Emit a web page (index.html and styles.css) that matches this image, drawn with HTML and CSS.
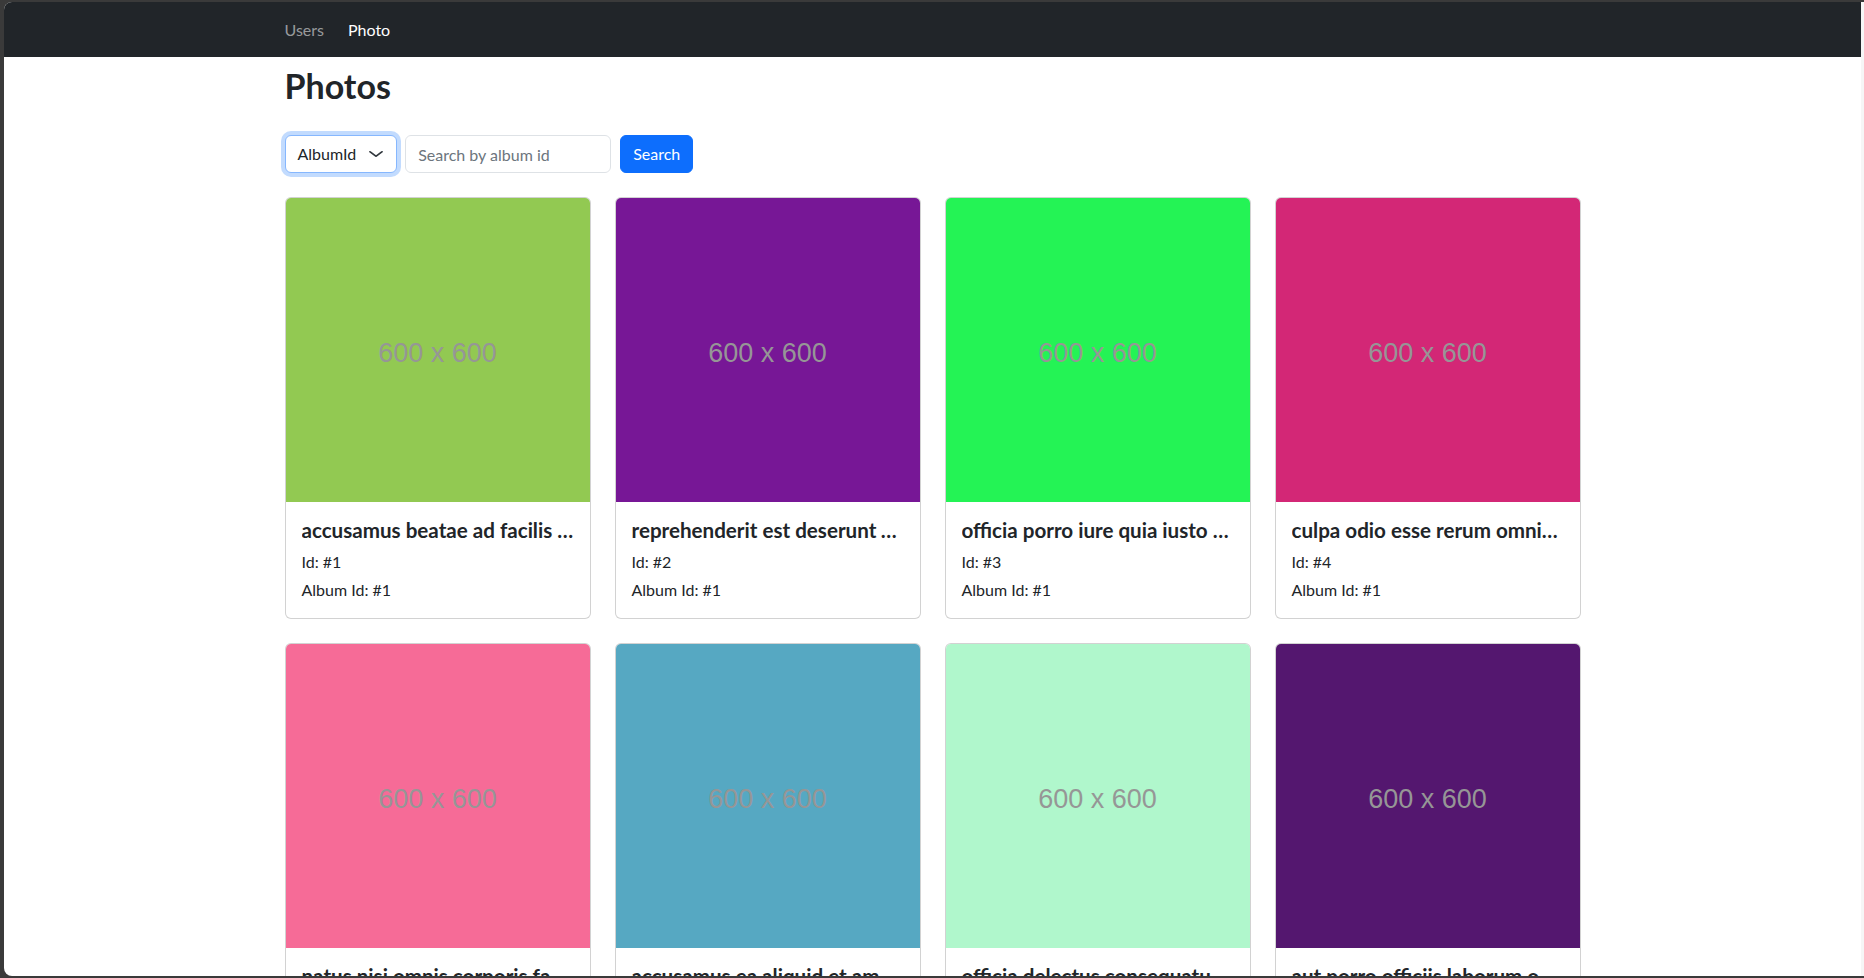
FILE: index.html
```html
<!DOCTYPE html>
<html lang="en">
<head>
<meta charset="utf-8">
<title>Photos</title>
<link rel="stylesheet" href="styles.css">
</head>
<body>
<div class="window">
  <nav class="navbar">
    <div class="container nav-inner">
      <a class="nav-link" href="#">Users</a>
      <a class="nav-link active" href="#">Photo</a>
    </div>
  </nav>
  <main class="container">
    <h2 class="page-title">Photos</h2>
    <form class="search-form">
      <div class="select">
        <span>AlbumId</span>
        <svg class="chevron" viewBox="0 0 16 16" width="16" height="12" preserveAspectRatio="none"><path d="m2 5 6 6 6-6" fill="none" stroke="#343a40" stroke-width="2" stroke-linecap="round" stroke-linejoin="round"/></svg>
      </div>
      <input class="input" type="text" placeholder="Search by album id">
      <button class="btn" type="button">Search</button>
    </form>
    <div class="grid">
      <div class="card"><div class="thumb" style="background:#92c952">600 x 600</div><div class="card-body"><h5 class="card-title">accusamus beatae ad facilis cum similique qui sunt</h5><p class="card-text">Id: #1</p><p class="card-text">Album Id: #1</p></div></div>
      <div class="card"><div class="thumb" style="background:#771796">600 x 600</div><div class="card-body"><h5 class="card-title">reprehenderit est deserunt velit ipsam</h5><p class="card-text">Id: #2</p><p class="card-text">Album Id: #1</p></div></div>
      <div class="card"><div class="thumb" style="background:#24f355">600 x 600</div><div class="card-body"><h5 class="card-title">officia porro iure quia iusto qui ipsa ut modi</h5><p class="card-text">Id: #3</p><p class="card-text">Album Id: #1</p></div></div>
      <div class="card"><div class="thumb" style="background:#d32776">600 x 600</div><div class="card-body"><h5 class="card-title">culpa odio esse rerum omnis laboriosam voluptate repudiandae</h5><p class="card-text">Id: #4</p><p class="card-text">Album Id: #1</p></div></div>
      <div class="card"><div class="thumb" style="background:#f66b97">600 x 600</div><div class="card-body"><h5 class="card-title">natus nisi omnis corporis facere molestiae rerum in</h5><p class="card-text">Id: #5</p><p class="card-text">Album Id: #1</p></div></div>
      <div class="card"><div class="thumb" style="background:#56a8c2">600 x 600</div><div class="card-body"><h5 class="card-title">accusamus ea aliquid et amet sequi nemo</h5><p class="card-text">Id: #6</p><p class="card-text">Album Id: #1</p></div></div>
      <div class="card"><div class="thumb" style="background:#b0f7cc">600 x 600</div><div class="card-body"><h5 class="card-title">officia delectus consequatur vero aut veniam explicabo molestias</h5><p class="card-text">Id: #7</p><p class="card-text">Album Id: #1</p></div></div>
      <div class="card"><div class="thumb" style="background:#54176f">600 x 600</div><div class="card-body"><h5 class="card-title">aut porro officiis laborum odit ea laudantium corporis</h5><p class="card-text">Id: #8</p><p class="card-text">Album Id: #1</p></div></div>
    </div>
  </main>
</div>
</body>
</html>
```
FILE: styles.css
```css
* { box-sizing: border-box; }

html, body {
  margin: 0;
  height: 978px;
  overflow: hidden;
  background: #3a3a3a;
}

body {
  font-family: "Segoe UI", Lato, "Noto Sans", sans-serif;
  font-size: 16px;
  line-height: 1.5;
  color: #212529;
}

.window {
  margin: 2px 0 2px 4px;
  height: 974px;
  background: #fff;
  border-right: 3px solid #f6f6f6;
  border-radius: 8px 0 0 8px;
  overflow: hidden;
}

.container {
  max-width: 1320px;
  margin: 0 auto;
  padding: 0 12px;
}

.navbar {
  background: #212529;
  height: 55px;
  display: flex;
  align-items: center;
}

.nav-inner {
  width: 100%;
  display: flex;
  gap: 24px;
}

.nav-link {
  color: rgba(255, 255, 255, 0.55);
  text-decoration: none;
  font-size: 16px;
  line-height: 24px;
}

.nav-link.active {
  color: #fff;
}

.page-title {
  margin: 9px 0 0;
  font-size: 34px;
  line-height: 40px;
  font-weight: 700;
}

.search-form {
  display: flex;
  align-items: center;
  margin: 29px 0 0;
}

.select {
  display: flex;
  align-items: center;
  height: 38px;
  padding: 0 12px;
  border: 1px solid #86b7fe;
  border-radius: 6px;
  box-shadow: 0 0 0 4px rgba(13, 110, 253, 0.25);
  background: #fff;
  gap: 12px;
}

.chevron {
  display: block;
}

.input {
  margin-left: 8px;
  width: 206px;
  height: 38px;
  padding: 6px 12px;
  border: 1px solid #dee2e6;
  border-radius: 6px;
  font: inherit;
  color: #212529;
}

.input::placeholder {
  color: #6c757d;
}

.btn {
  margin-left: 9px;
  height: 38px;
  padding: 6px 12px;
  border: 1px solid #0d6efd;
  border-radius: 6px;
  background: #0d6efd;
  color: #fff;
  font: inherit;
}

.grid {
  display: grid;
  grid-template-columns: repeat(4, 306px);
  column-gap: 24px;
  row-gap: 24px;
  margin-top: 24px;
}

.card {
  border: 1px solid rgba(0, 0, 0, 0.175);
  border-radius: 6px;
  overflow: hidden;
  background: #fff;
}

.thumb {
  aspect-ratio: 1 / 1;
  display: flex;
  align-items: center;
  justify-content: center;
  padding-top: 7px;
  font-family: "Liberation Sans", Arial, sans-serif;
  font-size: 27px;
  color: #969696;
}

.card-body {
  padding: 16px;
}

.card-title {
  margin: 0 0 8px;
  font-size: 20.6px;
  line-height: 24px;
  font-weight: 700;
  white-space: nowrap;
  overflow: hidden;
  text-overflow: ellipsis;
}

.card-text {
  margin: 0 0 4px;
  font-size: 16px;
  line-height: 24px;
}

.card-text:last-child {
  margin-bottom: 0;
}
```
